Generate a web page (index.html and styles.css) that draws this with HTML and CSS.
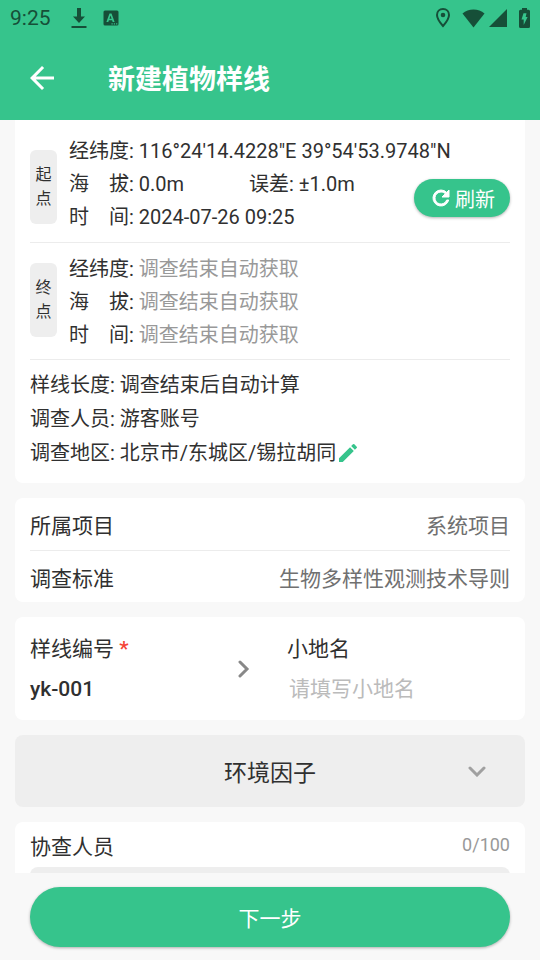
FILE: index.html
```html
<!DOCTYPE html>
<html lang="zh-CN">
<head>
<meta charset="utf-8">
<meta name="viewport" content="width=device-width, initial-scale=1">
<title>新建植物样线</title>
<link rel="stylesheet" href="styles.css">
</head>
<body>
<header class="top">
  <div class="status">
    <span class="clock">9:25</span>
    <svg class="status-icon download" width="16" height="22" viewBox="0 0 16 22" aria-hidden="true"><path d="M6 1h4v8.500h4L8 16 2 9.500h4zM.5 19h15v2H.5z"/></svg>
    <svg class="status-icon badge" width="16" height="16" viewBox="0 0 16 16" aria-hidden="true"><rect x=".5" y=".5" width="15" height="15" rx="1.500"/><path class="cut" d="M6.500 3.500h2L11.600 12H9.700l-.6-1.800H5.900L5.300 12H3.400zM7.500 5.600 6.400 8.800h2.200z"/><path class="cut" d="M8.500 13.300h1.200v1.200H8.500zM10.800 13.300H12v1.200h-1.200zM13.100 13.300h1.200v1.200h-1.200z"/></svg>
    <span class="spacer"></span>
    <svg class="status-icon pin" width="14" height="20" viewBox="0 0 14 20" aria-hidden="true"><path class="pin-line" d="M7 1C3.500 1 1 3.600 1 7c0 4.300 6 11 6 11s6-6.700 6-11c0-3.400-2.500-6-6-6z"/><circle cx="7" cy="7" r="2.300"/></svg>
    <svg class="status-icon wifi" width="23" height="19" viewBox="0 0 23 19" aria-hidden="true"><path d="M.5 4.500C3.500 2 7.300.5 11.500.5s8 1.500 11 4L11.500 18.500z"/></svg>
    <svg class="status-icon signal" width="18" height="18" viewBox="0 0 18 18" aria-hidden="true"><path d="M18 0v18H0z"/></svg>
    <svg class="status-icon" width="11" height="20" viewBox="0 0 11 20" aria-hidden="true"><path d="M3 0h5v1.800h1.500q1.500 0 1.500 1.500v15.200Q11 20 9.500 20h-8Q0 20 0 18.500V3.300q0-1.500 1.500-1.500H3z"/><path class="cut" d="M4.500 5.200h3L6.700 9h1.900L4.700 17v-5.500H2.500z"/></svg>
  </div>
  <div class="appbar">
    <button class="back" type="button" aria-label="返回"><svg width="36" height="36" viewBox="0 0 24 24" aria-hidden="true"><path d="M20 11H7.830l5.590-5.590L12 4l-8 8 8 8 1.410-1.410L7.830 13H20v-2z"/></svg></button>
    <h1>新建植物样线</h1>
  </div>
</header>

<main class="content">
  <section class="card summary">
    <div class="point start">
      <span class="tag">起<br>点</span>
      <div class="line wide">经纬度: 116°24'14.4228"E 39°54'53.9748"N</div>
      <div class="line pair"><span>海　拔: 0.0m</span><span>误差: ±1.0m</span></div>
      <div class="line">时　间: 2024-07-26 09:25</div>
      <button class="refresh" type="button"><svg width="24" height="24" viewBox="0 0 24 24" aria-hidden="true"><path d="M17.650 6.350A7.958 7.958 0 0 0 12 4a8 8 0 1 0 7.730 10h-2.080A6 6 0 1 1 12 6c1.660 0 3.140.690 4.220 1.780L13 11h7V4l-2.350 2.350z"/></svg>刷新</button>
    </div>
    <div class="point">
      <span class="tag">终<br>点</span>
      <div class="line">经纬度: <span class="pending">调查结束自动获取</span></div>
      <div class="line">海　拔: <span class="pending">调查结束自动获取</span></div>
      <div class="line">时　间: <span class="pending">调查结束自动获取</span></div>
    </div>
    <div class="facts">
      <div class="fact">样线长度: 调查结束后自动计算</div>
      <div class="fact">调查人员: 游客账号</div>
      <div class="fact">调查地区: 北京市/东城区/锡拉胡同<button class="edit" type="button" aria-label="编辑"><svg width="24" height="24" viewBox="0 0 24 24" aria-hidden="true"><path d="M3 17.250V21h3.750L17.810 9.940l-3.750-3.750L3 17.250zM20.710 7.040a1 1 0 0 0 0-1.410l-2.340-2.340a1 1 0 0 0-1.410 0l-1.830 1.830 3.750 3.750 1.830-1.830z"/></svg></button></div>
    </div>
  </section>

  <section class="card">
    <div class="row"><span>所属项目</span><span class="value">系统项目</span></div>
    <div class="row"><span>调查标准</span><span class="value">生物多样性观测技术导则</span></div>
  </section>

  <section class="card ids">
    <button class="code" type="button">
      <span class="code-text"><span class="field-name">样线编号 <span class="required">*</span></span><span class="code-value">yk-001</span></span>
      <svg width="12" height="18" viewBox="0 0 12 18" aria-hidden="true"><path d="M2 2l7 7-7 7"/></svg>
    </button>
    <div class="place">
      <label class="field-name" for="place">小地名</label>
      <input id="place" type="text" placeholder="请填写小地名">
    </div>
  </section>

  <button class="factors" type="button"><span>环境因子</span><svg width="18" height="12" viewBox="0 0 18 12" aria-hidden="true"><path d="M2 3l7 7 7-7"/></svg></button>

  <section class="card helpers">
    <div class="helpers-head"><label for="helpers">协查人员</label><span class="count">0/100</span></div>
    <textarea id="helpers" maxlength="100"></textarea>
  </section>
</main>

<footer class="footer"><button class="next" type="button">下一步</button></footer>
</body>
</html>
```
FILE: styles.css
```css
* { box-sizing: border-box; }

:root {
  --green: #36c48c;
  --dark-green: #164f38;
  --ink: #303030;
  --line: #ececec;
  --page: #f8f8f8;
}

body {
  margin: 0;
  height: 100vh;
  display: flex;
  flex-direction: column;
  background: var(--page);
  color: var(--ink);
  font-family: Roboto, "Noto Sans CJK SC", sans-serif;
  font-size: 20px;
}

button, input, textarea {
  font: inherit;
  color: inherit;
  border: 0;
  margin: 0;
  padding: 0;
  background: none;
}

svg { display: block; flex: none; }

.top { background: var(--green); flex: none; }

.status {
  display: flex;
  align-items: center;
  height: 36px;
  padding: 0 10px;
  color: var(--dark-green);
}
.clock { font-size: 21px; line-height: 36px; }
.status-icon { fill: var(--dark-green); margin-left: 18px; }
.status .download { margin-left: 20px; }
.status .badge { margin-left: 16px; }
.spacer { flex: 1; }
.status .wifi { margin-left: 12px; }
.status .signal { margin: 0 -6px 0 4px; }
.status .cut { fill: var(--green); fill-rule: evenodd; }
.pin-line { fill: none; stroke: var(--dark-green); stroke-width: 2; }

.appbar {
  display: flex;
  align-items: center;
  height: 84px;
  padding: 0 24px;
  color: #fff;
}
.back svg { fill: #fff; }
h1 {
  margin: 0 0 0 48px;
  padding-top: 4px;
  font-size: 27px;
  line-height: 36px;
  font-weight: 700;
}

.content {
  flex: 1;
  min-height: 0;
  overflow-y: auto;
  scrollbar-width: none;
  padding: 0 15px;
  display: flex;
  flex-direction: column;
  gap: 15px;
}
.content > * { flex: none; }

.card {
  background: #fff;
  border-radius: 8px;
  padding: 0 15px;
}
.summary {
  border-top-left-radius: 0;
  border-top-right-radius: 0;
  padding-bottom: 13px;
}

.point {
  display: grid;
  grid-template-columns: 27px 1fr auto;
  column-gap: 12px;
  padding: 10px 0 7px;
  border-bottom: 1px solid var(--line);
}
.start { padding: 15px 0 8px; }
.tag {
  grid-row: 1 / 4;
  align-self: center;
  margin-bottom: 6px;
  padding: 13px 0;
  border-radius: 6px;
  background: #eee;
  font-size: 16px;
  line-height: 24px;
  text-align: center;
}
.start .tag { margin: 4px 0 0; }
.line { grid-column: 2; line-height: 33px; white-space: nowrap; }
.wide { grid-column: 2 / 4; }
.pair { display: grid; grid-template-columns: 180px 1fr; }
.pending { color: #999; }

.refresh {
  grid-column: 3;
  grid-row: 2 / 4;
  align-self: start;
  margin-top: 11px;
  display: flex;
  align-items: center;
  gap: 2px;
  height: 38px;
  padding: 0 15px;
  border-radius: 19px;
  background: var(--green);
  color: #fff;
  box-shadow: 0 1px 3px rgba(0, 0, 0, 0.3);
}
.refresh svg { fill: #fff; stroke: #fff; stroke-width: 1; stroke-linejoin: round; }

.facts { padding-top: 8px; }
.fact { display: flex; align-items: center; line-height: 34px; }
.edit svg { fill: var(--green); }

.row {
  display: flex;
  align-items: center;
  justify-content: space-between;
  height: 52px;
  font-size: 21px;
}
.row + .row { border-top: 1px solid var(--line); }
.value { color: #707070; }

.ids {
  display: grid;
  grid-template-columns: 1fr 1fr;
  gap: 34px;
  padding-top: 12px;
  padding-bottom: 11px;
  font-size: 21px;
}
.code {
  display: flex;
  align-items: center;
  justify-content: space-between;
  padding-right: 3px;
  text-align: left;
}
.code svg { fill: none; stroke: #888; stroke-width: 3; stroke-linecap: round; }
.field-name, .code-value { display: block; line-height: 40px; }
.code-value { font-weight: 500; }
.required { color: #f44336; font-weight: 500; }
.place input { width: 100%; height: 40px; padding: 0 2px; outline: 0; }
.place input::placeholder { color: #bbb; opacity: 1; }

.factors {
  display: grid;
  grid-template-columns: 1fr auto 1fr;
  align-items: center;
  height: 72px;
  padding: 0 39px;
  border-radius: 8px;
  background: #eee;
  font-size: 23px;
}
.factors span { grid-column: 2; }
.factors svg { justify-self: end; fill: none; stroke: #a0a0a0; stroke-width: 3; stroke-linecap: round; }

.helpers { padding-bottom: 15px; }
.helpers-head {
  display: flex;
  align-items: center;
  justify-content: space-between;
  height: 45px;
  font-size: 21px;
}
.count { color: #999; font-size: 18px; }
.helpers textarea {
  display: block;
  width: 100%;
  height: 120px;
  padding: 12px;
  border-radius: 8px;
  background: #eee;
  resize: none;
}

.footer { flex: none; padding: 14px 30px 13px; }
.next {
  display: block;
  width: 100%;
  height: 60px;
  border-radius: 30px;
  background: var(--green);
  color: #fff;
  font-size: 21px;
  box-shadow: 0 1px 3px rgba(0, 0, 0, 0.3);
}
```
